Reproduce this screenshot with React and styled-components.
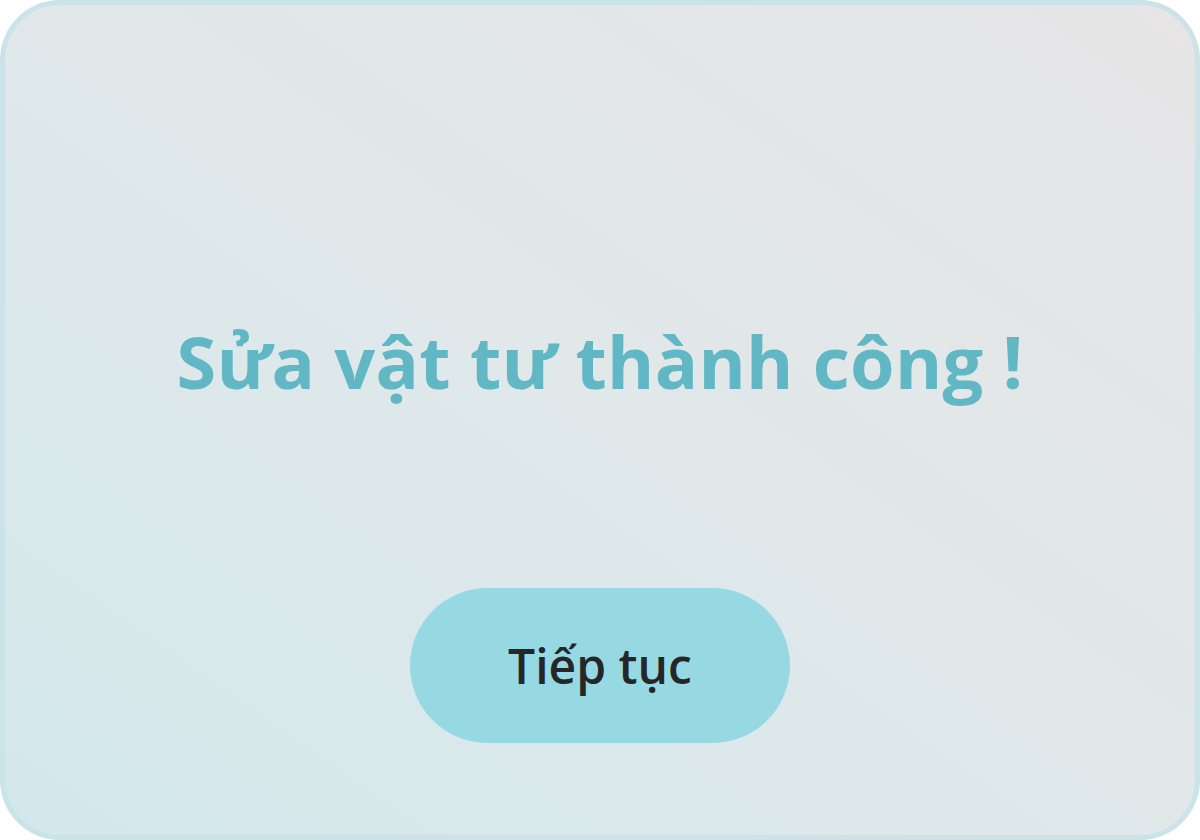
import styled, { createGlobalStyle } from 'styled-components';

const GlobalStyle = createGlobalStyle`
  html, body {
    margin: 0;
    padding: 0;
    background: #ffffff;
  }
  body {
    font-family: "Open Sans", "Noto Sans", sans-serif;
  }
`;

const Card = styled.div`
  box-sizing: border-box;
  width: 1200px;
  height: 840px;
  border-radius: 60px;
  border: 5px solid rgba(196, 226, 232, 0.8);
  background: linear-gradient(35deg, #d3e8ec 0%, #e0e8ea 50%, #e7e5e6 100%);
  display: flex;
  flex-direction: column;
  align-items: center;
  padding-top: 308px;
`;

const Title = styled.h1`
  margin: 0;
  font-family: "Open Sans", sans-serif;
  font-weight: 700;
  font-size: 72px;
  line-height: 96px;
  letter-spacing: 0.3px;
  color: #62b7c4;
`;

const ContinueButton = styled.button`
  margin-top: 179px;
  width: 380px;
  height: 155px;
  border: none;
  border-radius: 78px;
  background: #96d9e3;
  font-family: "Open Sans", sans-serif;
  font-weight: 600;
  font-size: 48px;
  color: #262626;
  cursor: pointer;
`;

export default function App() {
  return (
    <>
      <GlobalStyle />
      <Card>
        <Title>Sửa vật tư thành công !</Title>
        <ContinueButton>Tiếp tục</ContinueButton>
      </Card>
    </>
  );
}
